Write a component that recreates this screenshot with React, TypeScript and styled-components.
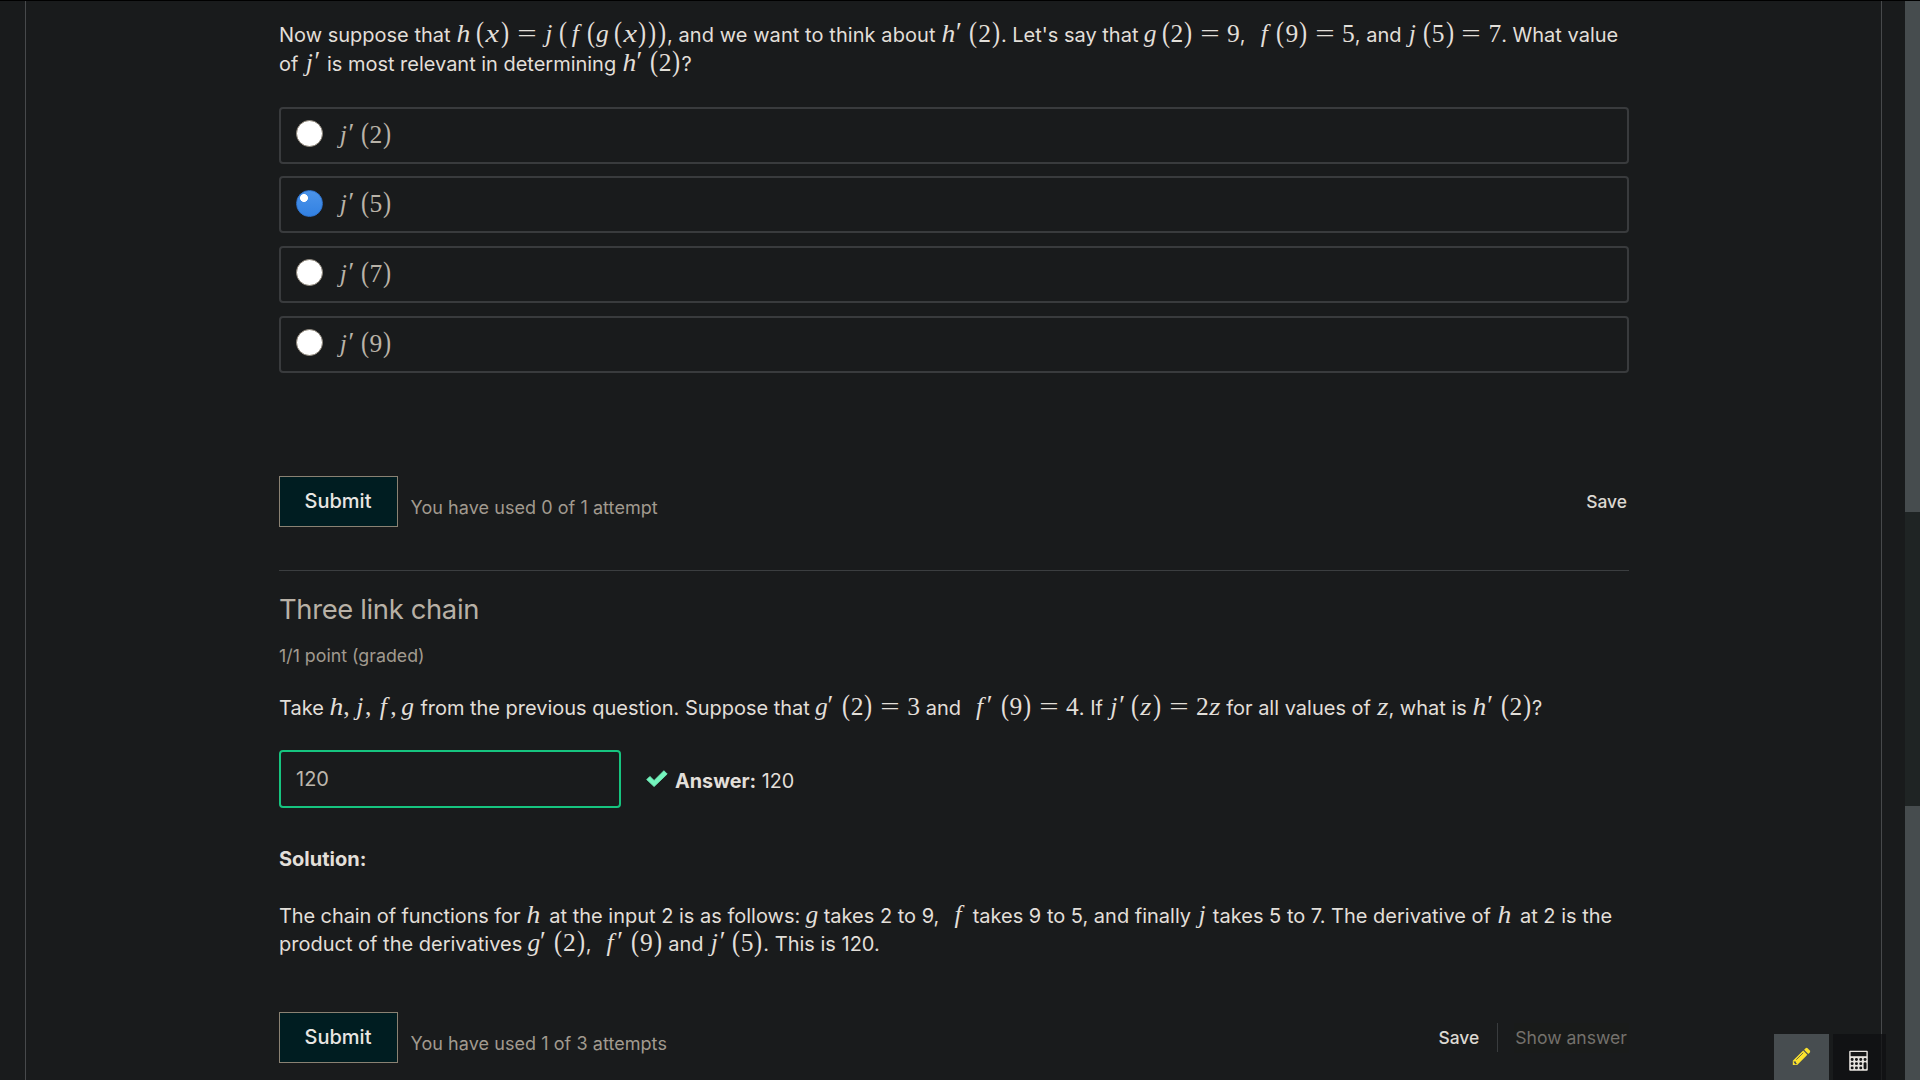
import React from "react";
import styled, { createGlobalStyle } from "styled-components";

const GlobalStyle = createGlobalStyle`
  *, *::before, *::after { box-sizing: border-box; }
  body {
    margin: 0;
    background: #191b1c;
    overflow: hidden;
    font-family: Inter, "Liberation Sans", sans-serif;
  }
`;

const Page = styled.div`
  position: relative;
  display: grid;
  grid-template-columns: 25px 1857px 23px 15px;
  width: 1920px;
  height: 1080px;
  overflow: hidden;
  background: #191b1c;
  border-top: 1px solid #000;
  color: #e2dfd9;
  font-size: 20px;
`;

const Frame = styled.main`
  grid-column: 2;
  display: flex;
  flex-direction: column;
  align-items: flex-start;
  border: solid #47494b;
  border-width: 0 1px;
  padding: 20px 252px 0 253px;
`;

const ScrollTrack = styled.div`
  grid-column: 4;
  display: flex;
  flex-direction: column;
  justify-content: space-between;
  background: #1f2424;
`;

const Thumb = styled.div<{ $height: number }>`
  height: ${(p) => p.$height}px;
  background: #464c4e;
`;

const Paragraph = styled.p<{ $line: number; $top?: number }>`
  margin: ${(p) => p.$top ?? 0}px 0 0;
  width: 1352px;
  line-height: ${(p) => p.$line}px;
  white-space: nowrap;
`;

const Run = styled.span<{ $track: number }>`
  letter-spacing: ${(p) => p.$track}px;
`;

const MathBox = styled.span<{ $before: number; $after: number }>`
  display: inline-block;
  margin-left: ${(p) => p.$before}px;
  margin-right: ${(p) => p.$after}px;
  font-family: "Liberation Serif", serif;
  font-size: 25.5px;
  line-height: 0;
  white-space: nowrap;
`;

type GlyphSpec = { w: number; italic?: boolean; stretch?: number; size?: number; lift?: number; left?: boolean };

const Glyph = styled.span<{ $g: GlyphSpec }>`
  display: inline-flex;
  justify-content: ${(p) => (p.$g.left ? "flex-start" : "center")};
  width: ${(p) => p.$g.w * 25.5}px;
  font-style: ${(p) => (p.$g.italic ? "italic" : "normal")};
  font-size: ${(p) => (p.$g.size ?? 1) * 25.5}px;
  transform: translateY(${(p) => -(p.$g.lift ?? 0)}px) scaleX(${(p) => p.$g.stretch ?? 1});
`;

const GLYPHS: Record<string, GlyphSpec> = {
  h: { w: 0.576, italic: true, stretch: 1.08 },
  x: { w: 0.572, italic: true, stretch: 1.2 },
  z: { w: 0.465, italic: true, stretch: 1.12 },
  j: { w: 0.412, italic: true },
  f: { w: 0.55, italic: true },
  g: { w: 0.477, italic: true },
  "(": { w: 0.389, size: 1.12, stretch: 0.85, lift: 0 },
  ")": { w: 0.389, size: 1.12, stretch: 0.85, lift: 0 },
  "=": { w: 1.334, stretch: 1.35 },
  ",": { w: 0.444, left: true },
  " ": { w: 0.167 },
};

const PRIME_WIDTH: Record<string, number> = { j: 0.27, h: 0.32, g: 0.35, f: 0.34 };

function glyphFor(c: string, previous: string): GlyphSpec {
  if (c === "'") return { w: PRIME_WIDTH[previous] ?? 0.3, size: 1.05, lift: 1.5, left: true };
  return GLYPHS[c] ?? { w: 0.5 };
}

function M({ children, before = 0, after = 0 }: { children: string; before?: number; after?: number }) {
  return (
    <MathBox $before={before} $after={after}>
      {children.split("").map((c, i, all) => (
        <Glyph key={i} $g={glyphFor(c, all[i - 1])}>
          {c === "'" ? "′" : c === " " ? "\u00a0" : c}
        </Glyph>
      ))}
    </MathBox>
  );
}

const Options = styled.div`
  display: flex;
  flex-direction: column;
  gap: 12.67px;
  margin-top: 28px;
`;

const Option = styled.label`
  display: flex;
  align-items: center;
  width: 1350px;
  height: 57px;
  padding: 0 0 3px 15px;
  border: 2px solid #393b3d;
  border-radius: 4px;
  color: #b9b3a8;
`;

const Radio = styled.span<{ $checked: boolean }>`
  width: 27px;
  height: 27px;
  margin-right: 15px;
  border-radius: 50%;
  border: 1px solid ${(p) => (p.$checked ? "#2f74cf" : "#8d8578")};
  background: ${(p) =>
    p.$checked
      ? "radial-gradient(circle at 7px 7px, #fff 3.6px, transparent 4.3px), linear-gradient(#4c94ea, #3281e2)"
      : "#fff"};
`;

const OptionText = styled.span`
  padding-top: 5px;
  line-height: 27px;
`;

const Actions = styled.div<{ $top: number }>`
  display: flex;
  align-items: flex-start;
  width: 1350px;
  height: 51px;
  margin-top: ${(p) => p.$top}px;
`;

const Submit = styled.button`
  width: 119px;
  height: 51px;
  padding: 0 1px 1px 0;
  border: 1px solid #8a8273;
  background: #001d21;
  color: #e8e6e3;
  font: 500 20px Inter, sans-serif;
`;

const Attempts = styled.span`
  margin: 20px auto 0 12.5px;
  color: #a19a8f;
  font-size: 18px;
  line-height: 24px;
  letter-spacing: 0.06px;
`;

const Link = styled.button<{ $muted?: boolean }>`
  height: 30px;
  margin-top: 11px;
  padding: 0 2px 0 1px;
  border: 0;
  background: ${(p) => (p.$muted ? "#191b1a" : "none")};
  color: ${(p) => (p.$muted ? "#74716c" : "#dcd8d1")};
  font: ${(p) => (p.$muted ? "400 17.6px" : "500 17.4px")} Inter, sans-serif;
`;

const Separator = styled.span`
  width: 1px;
  height: 29px;
  margin: 11px 16.5px 0 15.5px;
  background: #393c3e;
`;

const Divider = styled.hr`
  width: 1350px;
  height: 1px;
  margin: 43px 0 0;
  border: 0;
  background: #3b3e40;
`;

const Title = styled.h3`
  margin: 19px 0 0;
  color: #b8b1a6;
  font-size: 27.4px;
  font-weight: 400;
  line-height: 39px;
  letter-spacing: -0.35px;
`;

const Points = styled.div`
  margin-top: 15px;
  color: #a19a8f;
  font-size: 17.8px;
  line-height: 24px;
`;

const AnswerRow = styled.div`
  display: flex;
  align-items: center;
  margin-top: 28px;
`;

const AnswerInput = styled.div`
  display: flex;
  align-items: center;
  width: 342px;
  height: 58px;
  padding: 0 0 0 15px;
  border: 2px solid #16c47f;
  border-radius: 4px;
  color: #bdb7ad;
`;

const CheckIcon = styled.svg`
  width: 22px;
  height: 17px;
  margin: 0 7px 0 25px;
  fill: #74f4bd;
`;

const Answer = styled.span`
  margin-top: 4px;
  font-size: 19.8px;
`;

const Tools = styled.div`
  position: absolute;
  left: 1774px;
  bottom: 0;
  display: flex;
  gap: 4px;
`;

const Tool = styled.button<{ $active?: boolean }>`
  display: grid;
  justify-items: center;
  align-items: start;
  width: ${(p) => (p.$active ? 55 : 53)}px;
  height: 46px;
  padding: ${(p) => (p.$active ? "13px 2px 0 0" : "16px 2px 0 0")};
  border: 0;
  background: ${(p) => (p.$active ? "#474d50" : "rgba(15, 16, 17, 0.75)")};
`;

const keys: [number, number][] = [];
for (let r = 0; r < 3; r++) for (let c = 0; c < 4; c++) if (!(c === 3 && r > 0)) keys.push([c, r]);

function Pencil() {
  return (
    <svg width="20" height="20" viewBox="0 0 20 20">
      <path d="M12.2 3.6 16.4 7.8 6.2 18H1.8V13.8Z" fill="#fbe22d" />
      <path d="M13.1 2.7 14.6 1.2Q15.6.4 16.6 1.3L18.8 3.5Q19.6 4.5 18.8 5.4L17.3 6.9Z" fill="#fbe22d" />
      <path d="M5.3 12.7 12.2 5.8M3 14.7 5.3 17" stroke="#474d50" strokeWidth="0.8" fill="none" />
      <path d="M2.9 15.2h1.4v1.5h1.2" stroke="#474d50" strokeWidth="1.2" fill="none" />
    </svg>
  );
}

function Calculator() {
  return (
    <svg width="19" height="21" viewBox="0 0 19 21">
      <rect x="0.2" y="0.7" width="18.6" height="20" rx="1" fill="#e6e3de" />
      <rect x="1.6" y="2" width="15.8" height="4.2" fill="#141516" />
      {keys.map(([c, r]) => (
        <rect key={`${c}-${r}`} x={1.7 + c * 4.3} y={8 + r * 4.2} width="2.9" height="2.9" rx="1.3" fill="#141516" />
      ))}
      <rect x="14.6" y="12.2" width="2.9" height="7.1" rx="1.3" fill="#141516" />
    </svg>
  );
}

export default function App() {
  return (
    <>
      <GlobalStyle />
      <Page>
        <Frame>
          <Paragraph $line={28.8}>
            {"Now suppose that "}
            <M>h (x)=j (f (g (x)))</M>
            <Run $track={0.07}>{", and we want to think about "}</Run>
            <M>h' (2)</M>
            {". Let's say that "}
            <M>g (2)=9</M>
            {", "}
            <M before={6}>f (9)=5</M>
            {", and "}
            <M>j (5)=7</M>
            {". What value"}
            <br />
            {"of "}
            <M>j'</M>
            <Run $track={-0.02}>{" is most relevant in determining "}</Run>
            <M>h' (2)</M>?
          </Paragraph>

          <Options>
            {["2", "5", "7", "9"].map((n) => (
              <Option key={n}>
                <Radio $checked={n === "5"} />
                <OptionText>
                  <M>{`j' (${n})`}</M>
                </OptionText>
              </Option>
            ))}
          </Options>

          <Actions $top={103}>
            <Submit>Submit</Submit>
            <Attempts>You have used 0 of 1 attempt</Attempts>
            <Link>Save</Link>
          </Actions>

          <Divider />

          <Title>Three link chain</Title>
          <Points>1/1 point (graded)</Points>

          <Paragraph $line={28} $top={26}>
            {"Take "}
            <M before={-1} after={1}>h,j,f,g</M>
            <Run $track={-0.02}>{" from the previous question. Suppose that "}</Run>
            <M>g' (2)=3</M>
            {" and "}
            <M before={6}>f' (9)=4</M>
            {". If "}
            <M>j' (z)=2z</M>
            {" for all values of "}
            <M>z</M>
            {", what is "}
            <M>h' (2)</M>?
          </Paragraph>

          <AnswerRow>
            <AnswerInput>120</AnswerInput>
            <CheckIcon viewBox="0 0 22 17">
              <path d="M.7 9.6 3.9 6.4 8.1 10.5 17.9.7 21.2 4 8.1 16.6Z" strokeLinejoin="round" stroke="#74f4bd" strokeWidth="0.8" />
            </CheckIcon>
            <Answer>
              <b>Answer:</b> 120
            </Answer>
          </AnswerRow>

          <Paragraph $line={28} $top={37}>
            <b>Solution:</b>
          </Paragraph>

          <Paragraph $line={28} $top={29}>
            <Run $track={-0.1}>{"The chain of functions for "}</Run>
            <M after={3}>h</M>
            {" at the input 2 is as follows: "}
            <M>g</M>
            {" takes 2 to 9, "}
            <M before={6} after={2}>f</M>
            {" takes 9 to 5, and finally "}
            <M>j</M>
            {" takes 5 to 7. The derivative of "}
            <M after={3}>h</M>
            {" at 2 is the"}
            <br />
            {"product of the derivatives "}
            <M>g' (2)</M>
            {", "}
            <M before={6}>f' (9)</M>
            {" and "}
            <M>j' (5)</M>
            {". This is 120."}
          </Paragraph>

          <Actions $top={54}>
            <Submit>Submit</Submit>
            <Attempts>You have used 1 of 3 attempts</Attempts>
            <Link>Save</Link>
            <Separator />
            <Link $muted>Show answer</Link>
          </Actions>
        </Frame>
        <ScrollTrack>
          <Thumb $height={511} />
          <Thumb $height={274} />
        </ScrollTrack>
        <Tools>
          <Tool $active aria-label="Notes">
            <Pencil />
          </Tool>
          <Tool aria-label="Calculator">
            <Calculator />
          </Tool>
        </Tools>
      </Page>
    </>
  );
}
